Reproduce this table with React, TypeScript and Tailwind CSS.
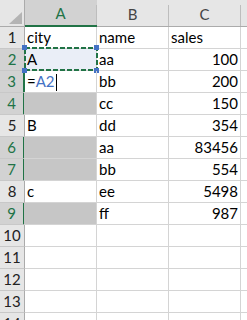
import React from "react";

type Row = { n: number; a?: string; b?: string; c?: string; gray?: boolean; sel?: boolean; kind?: "ref" | "edit" };

const rows: Row[] = [
  { n: 1, a: "city", b: "name", c: "sales" },
  { n: 2, a: "A", b: "aa", c: "100", sel: true, kind: "ref" },
  { n: 3, b: "bb", c: "200", sel: true, kind: "edit" },
  { n: 4, b: "cc", c: "150", sel: true, gray: true },
  { n: 5, a: "B", b: "dd", c: "354" },
  { n: 6, b: "aa", c: "83456", sel: true, gray: true },
  { n: 7, b: "bb", c: "554", sel: true, gray: true },
  { n: 8, a: "c", b: "ee", c: "5498" },
  { n: 9, b: "ff", c: "987", sel: true, gray: true },
  { n: 10 },
  { n: 11 },
  { n: 12 },
  { n: 13 },
  { n: 14 },
];

function Corner({ className }: { className: string }) {
  return <div className={"absolute w-[5px] h-[5px] bg-[#4472c4] " + className} />;
}

export default function App() {
  return (
    <div className="w-[247px] h-[320px] overflow-hidden bg-white font-['Lato','Liberation_Sans',sans-serif] text-[15px] text-black leading-none">
      {/* column header row */}
      <div className="flex h-[27px] bg-[#e6e6e6]">
        <div className="w-[25px] shrink-0 border-r border-b border-[#ababab] flex items-end justify-end pr-[2px] pb-[2px]">
          <svg width="13" height="12" viewBox="0 0 13 12">
            <polygon points="13,0 13,12 0,12" fill="#b4b4b4" />
          </svg>
        </div>
        <div className="w-[72px] shrink-0 bg-[#d2d2d2] border-b-2 border-[#217346] flex">
          <div className="flex-1 flex items-center justify-center text-[#217346] pt-[2px]">A</div>
          <div className="w-px h-[20px] self-end bg-[#bdbdbd]" />
        </div>
        {["B", "C"].map((l) => (
          <div key={l} className="w-[72px] shrink-0 border-b border-[#ababab] flex">
            <div className="flex-1 flex items-center justify-center text-[#444] pt-[2px]">{l}</div>
            <div className="w-px h-[21px] self-end bg-[#bdbdbd]" />
          </div>
        ))}
        <div className="flex-1 border-b border-[#ababab]" />
      </div>
      {rows.map((r) => (
        <div key={r.n} className="flex h-[22px]">
          <div
            className={
              "w-[25px] shrink-0 flex items-end justify-center pb-[3px] border-b border-[#c8c8c8] " +
              (r.sel ? "bg-[#d2d2d2] text-[#217346] " : "bg-[#e6e6e6] text-[#222] ") +
              (r.sel && r.kind !== "ref" ? "border-r-2 border-r-[#217346]" : "border-r border-r-[#ababab]")
            }
          >
            {r.n}
          </div>
          <div
            className={
              "relative w-[72px] shrink-0 border-r border-b border-[#d4d4d4] flex items-end pl-[2px] pb-[3px] " +
              (r.gray ? "bg-[#c6c6c6] " : r.kind === "ref" ? "bg-[#eaeef7] " : "") +
              (r.sel && r.kind !== "ref" ? "ml-[-1px] pl-[3px] w-[73px]" : "")
            }
          >
            {r.a}
            {r.kind === "edit" && (
              <span className="flex items-end">
                <span>=</span>
                <span className="text-[#4472c4]">A2</span>
                <span className="w-px h-[17px] bg-black ml-[1px] mb-[-2px]" />
              </span>
            )}
            {r.kind === "ref" && (
              <div className="absolute left-[-1px] top-[-2px] right-[-1px] bottom-[-1px]">
                <svg className="absolute inset-0" width="74" height="24">
                  <rect x="1" y="1" width="72" height="22" fill="none" stroke="#217346" strokeWidth="2" strokeDasharray="5 2" />
                </svg>
                <Corner className="left-[-2px] top-[-2px]" />
                <Corner className="right-[-2px] top-[-2px]" />
                <Corner className="left-[-2px] bottom-[-2px]" />
                <Corner className="right-[-2px] bottom-[-2px]" />
              </div>
            )}
          </div>
          <div className="w-[72px] shrink-0 border-r border-b border-[#d4d4d4] flex items-end pl-[2px] pb-[3px]">{r.b}</div>
          <div
            className={
              "w-[72px] shrink-0 border-r border-b border-[#d4d4d4] flex items-end pb-[3px] " +
              (r.n === 1 ? "pl-[2px]" : "justify-end pr-[2px]")
            }
          >
            {r.c}
          </div>
          <div className="flex-1 border-b border-[#d4d4d4]" />
        </div>
      ))}
    </div>
  );
}
